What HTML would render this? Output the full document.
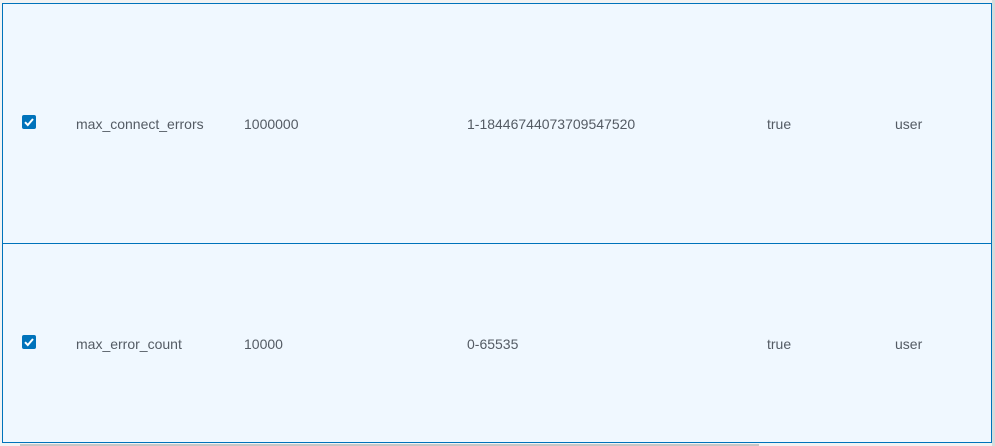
<!DOCTYPE html>
<html><head><style>
html,body{margin:0;padding:0;width:995px;height:446px;background:#f2f3f3;overflow:hidden;font-family:"Liberation Sans","DejaVu Sans",sans-serif;}
.box{position:absolute;left:2px;top:3px;width:988px;height:438px;border:1px solid #0073bb;background:#f0f8ff;}
.sep{position:absolute;left:2px;top:243px;width:990px;height:1px;background:#0073bb;}
.sh{position:absolute;left:992px;top:0;width:3px;height:446px;background:#d5dbdb;}
.sb{position:absolute;left:20px;top:444px;width:739px;height:2px;background:#c6c6c6;}
.row{position:absolute;left:0;width:995px;height:20px;font-size:14px;color:#545b64;}
.row span{position:absolute;top:3px;}
.cb{position:absolute;left:22px;top:2px;width:14px;height:14px;background:#0073bb;border-radius:2px;}
</style></head><body>
<div class="box"></div>
<div class="sep"></div>
<div class="sh"></div>
<div class="sb"></div>
<div class="row" style="top:113px">
<div class="cb"><svg width="14" height="14" viewBox="0 0 14 14"><path d="M3 7.2 L5.8 10 L11 4" stroke="#fff" stroke-width="2" fill="none"/></svg></div>
<span style="left:76px">max_connect_errors</span><span style="left:244px">1000000</span><span style="left:467px">1-18446744073709547520</span><span style="left:767px">true</span><span style="left:895px">user</span></div>
<div class="row" style="top:333px">
<div class="cb"><svg width="14" height="14" viewBox="0 0 14 14"><path d="M3 7.2 L5.8 10 L11 4" stroke="#fff" stroke-width="2" fill="none"/></svg></div>
<span style="left:76px">max_error_count</span><span style="left:244px">10000</span><span style="left:467px">0-65535</span><span style="left:767px">true</span><span style="left:895px">user</span></div>
</body></html>
